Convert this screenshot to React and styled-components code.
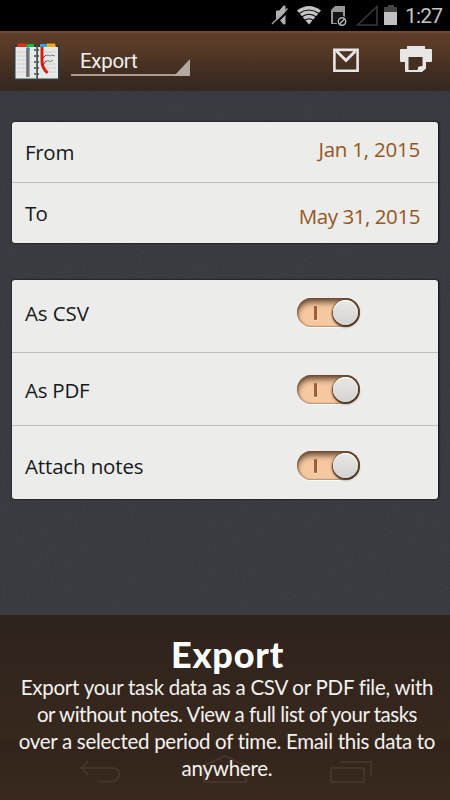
import React from "react";
import styled, { createGlobalStyle } from "styled-components";

const GlobalStyle = createGlobalStyle`
  * {
    box-sizing: border-box;
  }
  body {
    margin: 0;
    background: #000;
  }
`;

const Screen = styled.div`
  width: 450px;
  height: 800px;
  display: flex;
  flex-direction: column;
  overflow: hidden;
  font-family: "Open Sans", sans-serif;
`;

const StatusBar = styled.div`
  height: 31px;
  flex-shrink: 0;
  display: flex;
  justify-content: flex-end;
  background: #000;
`;

const Clock = styled.span`
  width: 45px;
  font-family: Roboto, sans-serif;
  font-size: 21px;
  line-height: 32px;
  letter-spacing: -0.8px;
  color: #c4c4c4;
`;

const Toolbar = styled.div`
  height: 60px;
  flex-shrink: 0;
  display: flex;
  padding: 0 17px 0 13px;
  border-top: 2px solid #6d4c37;
  background: linear-gradient(#5d3d29, #5a3b28 20%, #3b2a1f 80%, #36291f);
`;

const Logo = styled.svg`
  margin-top: 10px;
  width: 47px;
  height: 38px;
`;

const Spinner = styled.div`
  position: relative;
  width: 119px;
  height: 43px;
  margin-left: 11px;
  padding-left: 9px;
  border-bottom: 2px solid #a79b93;
  font-family: Roboto, sans-serif;
  font-size: 20.5px;
  line-height: 56px;
  letter-spacing: -0.3px;
  color: #f2f0ee;

  &::after {
    content: "";
    position: absolute;
    right: 0;
    bottom: -2px;
    border-left: 16px solid transparent;
    border-bottom: 17px solid #b3a9a2;
  }
`;

const Actions = styled.div`
  display: flex;
  gap: 39px;
  margin-left: auto;
  padding-top: 12px;
`;

const Content = styled.div`
  position: relative;
  flex: 1;
  display: flex;
  flex-direction: column;
  gap: 37px;
  padding: 31px 12px 0;
  background: #36383d;
  box-shadow: inset 0 2px 2px #343841;
`;

const Texture = styled.svg`
  position: absolute;
  inset: 0;
  width: 100%;
  height: 100%;
  opacity: 0.06;
`;

const Card = styled.div`
  position: relative;
  border-radius: 3px;
  background: #ececea;
  box-shadow: 0 0 2px #141517, 1px 0 2px #101113;
`;

const Row = styled.div`
  display: flex;
  justify-content: space-between;
  height: ${(props) => props.$height}px;
  padding: ${(props) => props.$top}px 18px 0 13px;

  & + & {
    border-top: 1px solid #bdbdbb;
  }
`;

const Label = styled.span`
  font-size: 20.5px;
  line-height: 28px;
  letter-spacing: ${(props) => props.$spacing || -0.3}px;
  color: #15191c;
`;

const DateValue = styled.span`
  margin-top: ${(props) => props.$shift}px;
  font-size: 20.5px;
  line-height: 28px;
  letter-spacing: ${(props) => props.$spacing}px;
  color: #935723;
`;

const Switch = styled.div`
  position: relative;
  width: 63px;
  height: 29px;
  margin: ${(props) => props.$shift}px 60px 0 0;
  border-radius: 15px;
  background: #f5c8a0;
  box-shadow: inset 0 5px 6px -1px #5b4029, inset -2px 0 2px #77593e,
    inset 1px 0 2px #a98665, 0 1px 0 #fff;

  &::before {
    content: "";
    position: absolute;
    left: 17px;
    top: 8px;
    width: 3px;
    height: 14px;
    border-radius: 1px;
    background: #9d5d38;
    box-shadow: 0 1px 1px #fbe6d2;
  }
`;

const Knob = styled.div`
  position: absolute;
  right: 2px;
  top: 2px;
  width: 25px;
  height: 25px;
  border-radius: 50%;
  background: linear-gradient(#e9e8e6, #d5d3d1);
  box-shadow: inset 0 1px 1px #fff, 0 1px 2px 1px #39271b;
`;

const Caption = styled.div`
  position: relative;
  height: 185px;
  flex-shrink: 0;
  padding-top: 19px;
  background: linear-gradient(#2e231d, #37281d 124px, #33241b 126px, #39291e);
  font-family: Lato, sans-serif;
  text-align: center;
  color: #f4f2f0;
`;

const Title = styled.h1`
  position: relative;
  margin: 0;
  padding-left: 5px;
  font-size: 36px;
  font-weight: 900;
  line-height: 40px;
  letter-spacing: 0.8px;
  color: #fff;
`;

const Line = styled.div`
  position: relative;
  padding-left: 4px;
  font-size: 20.5px;
  line-height: 27px;
  letter-spacing: ${(props) => props.$spacing}px;
  white-space: nowrap;
`;

const NavIcons = styled.svg`
  position: absolute;
  left: 0;
  bottom: 0;
`;

const StatusIcons = () => (
  <svg width="134" height="31" viewBox="270 0 134 31">
    <path d="M275.500 11h3l4-5h1.500v18h-1.500l-4-5h-3z" fill="#b0b0b0" stroke="#b0b0b0" />
    <path d="M272 26L287.500 10.500" stroke="#000" strokeWidth="2" />
    <path d="M271 24L286.500 8.500" stroke="#a5a5a5" strokeWidth="1.500" />
    <path d="M296 10.500q12-9 24 0L308 24.500z" fill="#c4c4c4" />
    <g fill="none" stroke="#000" strokeWidth="1.100">
      <path d="M298 13.500q10-7 20 0" />
      <path d="M300.500 17q7.500-5.500 15 0" />
      <path d="M303.500 20.500q4.500-3.500 9 0" />
    </g>
    <path d="M330 10l4-4h10v18h-14z" fill="#969696" />
    <path d="M332 12h10v11h-10z" fill="#151515" />
    <circle cx="341" cy="21.500" r="5.500" fill="#000" />
    <circle cx="341" cy="21.500" r="3.700" fill="none" stroke="#b5b5b5" strokeWidth="1.500" />
    <path d="M338.500 24l5-5" stroke="#b5b5b5" strokeWidth="1.500" />
    <path d="M356.500 25L376 6.500V25z" fill="none" stroke="#393939" strokeWidth="1.600" />
    <path d="M383 7h4V5h6v2h3v5h-13z" fill="#444" />
    <path d="M383 12h13v13h-13z" fill="#c0c0c0" />
  </svg>
);

const Notebook = () => (
  <Logo viewBox="13 43 47 38">
    <rect x="13.500" y="45" width="46" height="35" rx="1" fill="#303b3c" />
    <path d="M15.500 47h20.500v31.500H15.500zM38 47h20v31.500H38z" fill="#e7e9e6" />
    <path d="M17 52h9M17 56h9M17 60h9M17 64h9M17 68h9M17 72h9M45 52h11M45 64h11M45 68h11M45 72h11" stroke="#ccd0ce" />
    <path d="M18 43.500h8V47h-9z" fill="#ed2b17" />
    <path d="M26.500 44h7.500v3h-7.500z" fill="#19b83b" />
    <path d="M40 44h7v3h-7z" fill="#28a9dc" />
    <path d="M47 43.500h8l1 3.500h-9z" fill="#f3a916" />
    <path d="M28 48v29" stroke="#5b6167" strokeWidth="3.400" />
    <path d="M29.200 49v28" stroke="#a5abad" strokeWidth="1.200" />
    <circle cx="28" cy="48.500" r="1.500" fill="#3484c8" />
    <path d="M36.800 46v33" stroke="#677071" strokeWidth="1.500" />
    <path d="M34 50h5M34 56h5M34 62h5M34 68h5M34 74h5" stroke="#3f4949" strokeWidth="1.400" strokeDasharray="2 1" />
    <path d="M42 47v14q0 7 5.500 12" fill="none" stroke="#d81c12" strokeWidth="3" />
    <path d="M42 59l4-4M43 65l3-4" stroke="#a32119" />
    <path d="M46 56l2-1 2 1 2-1 3 1M46 61.500l2-1 2 1 3-1" fill="none" stroke="#596363" strokeWidth=".8" />
  </Logo>
);

const MailIcon = () => (
  <svg width="28" height="28" viewBox="0 0 28 28">
    <path d="M2.500 6.500h23v20h-23z" fill="none" stroke="#281b13" strokeWidth="3" opacity=".35" />
    <path d="M2.400 4.900h23.200v20.800H2.400z" fill="none" stroke="#e8e6e4" strokeWidth="2.600" />
    <path d="M4.500 6l9.500 9.500L23.500 6" fill="none" stroke="#e8e6e4" strokeWidth="3" />
  </svg>
);

const PrintIcon = () => (
  <svg width="34" height="28" viewBox="0 0 34 28">
    <path
      d="M8 1h18v3h6q1 0 1 1v11q0 1-1 1h-5v6.500L23 27H7q-1 0-1-1v-9H2q-1 0-1-1V5q0-1 1-1h6z"
      fill="#e8e6e4"
    />
    <path d="M9.500 12h14v9l-4 1-1 3h-9z" fill="#442f21" />
    <path d="M19 25v-3l4.500-1z" fill="#e8e6e4" />
  </svg>
);

const options = [
  { text: "As CSV", height: 72, top: 19, spacing: -0.1, shift: -1 },
  { text: "As PDF", height: 73, top: 23, spacing: -0.25, shift: -1 },
  { text: "Attach notes", height: 74, top: 26, spacing: -0.15, shift: -1 },
];

const lines = [
  { text: "Export your task data as a CSV or PDF file, with", spacing: -0.25 },
  { text: "or without notes. View a full list of your tasks", spacing: -0.48 },
  { text: "over a selected period of time. Email this data to", spacing: -0.3 },
  { text: "anywhere.", spacing: -0.25 },
];

export default function App() {
  return (
    <Screen>
      <GlobalStyle />
      <StatusBar>
        <StatusIcons />
        <Clock>1:27</Clock>
      </StatusBar>
      <Toolbar>
        <Notebook />
        <Spinner>Export</Spinner>
        <Actions>
          <MailIcon />
          <PrintIcon />
        </Actions>
      </Toolbar>
      <Content>
        <Texture>
          <filter id="grain">
            <feTurbulence type="fractalNoise" baseFrequency="0.5" numOctaves="2" />
            <feColorMatrix type="saturate" values="0" />
          </filter>
          <rect width="100%" height="100%" filter="url(#grain)" />
        </Texture>
        <Card>
          <Row $height={60} $top={16}>
            <Label>From</Label>
            <DateValue $shift={-3} $spacing={-0.22}>
              Jan 1, 2015
            </DateValue>
          </Row>
          <Row $height={61} $top={16}>
            <Label $spacing={-0.8}>To</Label>
            <DateValue $shift={3} $spacing={-0.43}>
              May 31, 2015
            </DateValue>
          </Row>
        </Card>
        <Card>
          {options.map((row) => (
            <Row key={row.text} $height={row.height} $top={row.top}>
              <Label $spacing={row.spacing}>{row.text}</Label>
              <Switch $shift={row.shift}>
                <Knob />
              </Switch>
            </Row>
          ))}
        </Card>
      </Content>
      <Caption>
        <NavIcons
          width="450"
          height="60"
          viewBox="0 740 450 60"
          fill="none"
          stroke="#44342a"
          strokeWidth="2.200"
        >
          <path d="M88 761l-7 7 7 7M81 768h32q6 0 6 6t-6 7.500H98" />
          <path d="M204 782v-14h-5l26-12 26 12h-5v14z" />
          <path d="M331 768h33v14h-33zM340 762h31v14" />
        </NavIcons>
        <Title>Export</Title>
        {lines.map((line) => (
          <Line key={line.text} $spacing={line.spacing}>
            {line.text}
          </Line>
        ))}
      </Caption>
    </Screen>
  );
}
